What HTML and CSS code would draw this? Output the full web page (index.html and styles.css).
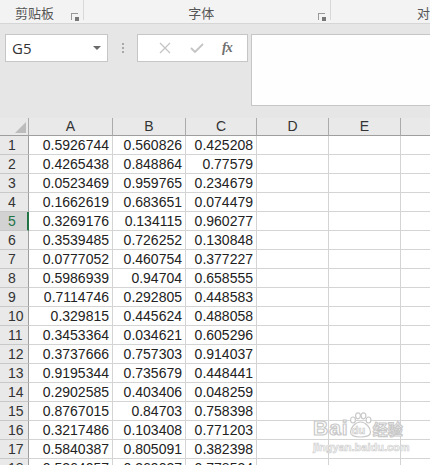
FILE: index.html
```html
<!DOCTYPE html>
<html lang="zh-CN">
<head>
  <meta charset="UTF-8">
  <title>Excel</title>
  <link rel="stylesheet" href="styles.css">
</head>
<body>
  <div class="window">
    <!-- ribbon group labels -->
    <div class="ribbon">
      <div class="group group-clip">
        <span class="group-label">剪贴板</span>
        <span class="launcher"></span>
      </div>
      <div class="group group-font">
        <span class="group-label">字体</span>
        <span class="launcher"></span>
      </div>
      <div class="group group-align">
        <span class="group-label">对</span>
      </div>
    </div>

    <!-- formula bar -->
    <div class="formula-bar">
      <div class="name-box">
        <span>G5</span>
        <span class="caret"></span>
      </div>
      <div class="grip"><i></i><i></i><i></i></div>
      <div class="fx-buttons">
        <svg width="12" height="12" viewBox="0 0 12 12"><path d="M1 1 L11 11 M11 1 L1 11" stroke="#c4c4c4" stroke-width="1.3" fill="none"/></svg>
        <svg width="14" height="12" viewBox="0 0 14 12"><path d="M1 6 L5 10 L13 2" stroke="#c4c4c4" stroke-width="1.8" fill="none"/></svg>
        <span class="fx">fx</span>
      </div>
      <div class="formula-input"></div>
    </div>

    <!-- sheet -->
    <div class="sheet">
      <div class="row head">
        <div class="corner"><span class="tri"></span></div>
        <div>A</div><div>B</div><div>C</div><div>D</div><div>E</div><div></div>
      </div>
      <div class="row"><div class="rh">1</div><div>0.5926744</div><div>0.560826</div><div>0.425208</div><div></div><div></div><div></div></div>
      <div class="row"><div class="rh">2</div><div>0.4265438</div><div>0.848864</div><div>0.77579</div><div></div><div></div><div></div></div>
      <div class="row"><div class="rh">3</div><div>0.0523469</div><div>0.959765</div><div>0.234679</div><div></div><div></div><div></div></div>
      <div class="row"><div class="rh">4</div><div>0.1662619</div><div>0.683651</div><div>0.074479</div><div></div><div></div><div></div></div>
      <div class="row"><div class="rh active">5</div><div>0.3269176</div><div>0.134115</div><div>0.960277</div><div></div><div></div><div></div></div>
      <div class="row"><div class="rh">6</div><div>0.3539485</div><div>0.726252</div><div>0.130848</div><div></div><div></div><div></div></div>
      <div class="row"><div class="rh">7</div><div>0.0777052</div><div>0.460754</div><div>0.377227</div><div></div><div></div><div></div></div>
      <div class="row"><div class="rh">8</div><div>0.5986939</div><div>0.94704</div><div>0.658555</div><div></div><div></div><div></div></div>
      <div class="row"><div class="rh">9</div><div>0.7114746</div><div>0.292805</div><div>0.448583</div><div></div><div></div><div></div></div>
      <div class="row"><div class="rh">10</div><div>0.329815</div><div>0.445624</div><div>0.488058</div><div></div><div></div><div></div></div>
      <div class="row"><div class="rh">11</div><div>0.3453364</div><div>0.034621</div><div>0.605296</div><div></div><div></div><div></div></div>
      <div class="row"><div class="rh">12</div><div>0.3737666</div><div>0.757303</div><div>0.914037</div><div></div><div></div><div></div></div>
      <div class="row"><div class="rh">13</div><div>0.9195344</div><div>0.735679</div><div>0.448441</div><div></div><div></div><div></div></div>
      <div class="row"><div class="rh">14</div><div>0.2902585</div><div>0.403406</div><div>0.048259</div><div></div><div></div><div></div></div>
      <div class="row"><div class="rh">15</div><div>0.8767015</div><div>0.84703</div><div>0.758398</div><div></div><div></div><div></div></div>
      <div class="row"><div class="rh">16</div><div>0.3217486</div><div>0.103408</div><div>0.771203</div><div></div><div></div><div></div></div>
      <div class="row"><div class="rh">17</div><div>0.5840387</div><div>0.805091</div><div>0.382398</div><div></div><div></div><div></div></div>
      <div class="row"><div class="rh">18</div><div>0.5264057</div><div>0.369037</div><div>0.778534</div><div></div><div></div><div></div></div>
    </div>

    <!-- baidu jingyan watermark -->
    <div class="watermark">
      <div class="wm-top">
        <span class="wm-bai">Bai</span>
        <span class="wm-paw">
          <svg width="23" height="26" viewBox="0 0 23 26">
            <g fill="#fff" stroke="#c9c9c9" stroke-width="1.2">
              <ellipse cx="4" cy="8" rx="2.4" ry="3"/>
              <ellipse cx="9" cy="3.8" rx="2.4" ry="3"/>
              <ellipse cx="14.5" cy="3.8" rx="2.4" ry="3"/>
              <ellipse cx="19.5" cy="8" rx="2.4" ry="3"/>
              <path d="M11.5 10 C6 10 1.5 16 1.5 20 C1.5 24 5.5 25 11.5 25 C17.5 25 21.5 24 21.5 20 C21.5 16 17 10 11.5 10 Z"/>
            </g>
          </svg>
          <span class="wm-du">du</span>
        </span>
        <span class="wm-jy">经验</span>
      </div>
      <div class="wm-url">jingyan.baidu.com</div>
    </div>
  </div>
</body>
</html>
```

FILE: styles.css
```css
body {
  margin: 0;
  background: #e6e6e6;
  font-family: "Liberation Sans", Arial, sans-serif;
  overflow: hidden;
}

.window {
  position: relative;
  width: 430px;
  height: 465px;
  overflow: hidden;
  background: #e6e6e6;
}

/* ribbon */
.ribbon {
  display: flex;
  height: 24px;
  background: #f3f3f3;
  border-bottom: 1px solid #d6d6d6;
  box-sizing: border-box;
  font-family: "Noto Sans CJK SC", sans-serif;
  font-size: 13px;
  color: #555;
}

.group {
  position: relative;
  height: 20px;
  border-right: 1px solid #d8d8d8;
  display: flex;
  align-items: center;
  box-sizing: border-box;
}

.group-label {
  line-height: 20px;
  padding-top: 6px;
}

.group-clip {
  width: 86px;
  padding-left: 15px;
}

.group-font {
  width: 250px;
  padding-left: 104px;
}

.group-align {
  flex: 1;
  border-right: none;
  padding-left: 86px;
}

.launcher {
  position: absolute;
  right: 5px;
  bottom: 0;
  width: 6px;
  height: 6px;
  border-left: 1px solid #999;
  border-top: 1px solid #999;
}

.launcher::after {
  content: "";
  position: absolute;
  right: -1px;
  bottom: -1px;
  width: 4px;
  height: 4px;
  background: #777;
}

/* formula bar */
.formula-bar {
  display: flex;
  align-items: flex-start;
  height: 93px;
  padding-top: 10px;
  box-sizing: border-box;
}

.name-box {
  width: 103px;
  height: 28px;
  margin-left: 5px;
  background: #fff;
  border: 1px solid #c6c6c6;
  box-sizing: border-box;
  display: flex;
  align-items: center;
  justify-content: space-between;
  padding: 0 6px 0 6px;
  font-family: "Open Sans", sans-serif;
  font-size: 15px;
  color: #333;
}

.caret {
  width: 0;
  height: 0;
  border-left: 4px solid transparent;
  border-right: 4px solid transparent;
  border-top: 4px solid #6a6a6a;
}

.grip {
  width: 29px;
  height: 28px;
  display: flex;
  flex-direction: column;
  align-items: center;
  justify-content: center;
  gap: 2px;
}

.grip i {
  width: 2px;
  height: 2px;
  background: #a8a8a8;
}

.fx-buttons {
  width: 111px;
  height: 28px;
  background: #fff;
  border: 1px solid #c6c6c6;
  box-sizing: border-box;
  display: flex;
  align-items: center;
  justify-content: space-around;
  padding: 0 6px 0 12px;
}

.fx {
  font-family: "Liberation Serif", serif;
  font-style: italic;
  font-weight: bold;
  font-size: 14px;
  color: #707070;
  letter-spacing: -1px;
}

.formula-input {
  flex: 1;
  height: 72px;
  margin-left: 3px;
  background: #fefefe;
  border: 1px solid #c6c6c6;
  border-right: none;
  box-sizing: border-box;
}

/* sheet grid */
.sheet {
  background: #fff;
}

.row {
  display: grid;
  grid-template-columns: 29px 84px 73px 71px 72px 72px 60px;
  height: 19px;
  font-size: 14px;
  color: #222;
}

.row > div {
  border-right: 1px solid #d4d4d4;
  border-bottom: 1px solid #d4d4d4;
  box-sizing: border-box;
  text-align: right;
  padding-right: 3px;
  line-height: 18px;
  white-space: nowrap;
  overflow: hidden;
}

.row > .rh {
  background: #e9e9e9;
  color: #333;
  text-align: left;
  padding-left: 8px;
  border-right: 1px solid #9e9e9e;
  border-bottom: 1px solid #c8c8c8;
}

.row > .rh.active {
  background: #d2d2d2;
  color: #217346;
  border-right: 2px solid #217346;
}

.row.head {
  height: 18px;
  margin-top: 1px;
  background: #e9e9e9;
}

.row.head > div {
  background: #e9e9e9;
  text-align: center;
  padding-right: 0;
  color: #333;
  line-height: 17px;
  border-right: 1px solid #ababab;
  border-bottom: 1px solid #9e9e9e;
}

.corner {
  position: relative;
}

.tri {
  position: absolute;
  right: 2px;
  bottom: 2px;
  width: 0;
  height: 0;
  border-left: 11px solid transparent;
  border-bottom: 11px solid #bcbcbc;
}

/* watermark over the grid */
.watermark {
  position: absolute;
  left: 313px;
  top: 411px;
  width: 92px;
}

.wm-top {
  display: flex;
  align-items: flex-end;
  height: 27px;
}

.wm-bai,
.wm-du {
  font-family: "Liberation Sans", Arial, sans-serif;
  font-weight: bold;
  color: #fff;
  -webkit-text-stroke: 1.2px #c9c9c9;
}

.wm-bai {
  font-size: 21px;
  line-height: 20px;
  letter-spacing: 1px;
}

.wm-paw {
  position: relative;
  width: 23px;
  height: 26px;
}

.wm-paw svg {
  display: block;
}

.wm-du {
  position: absolute;
  left: 3px;
  bottom: 2px;
  font-size: 11px;
  line-height: 11px;
  -webkit-text-stroke: 0.7px #c9c9c9;
}

.wm-jy {
  font-family: "Noto Sans CJK SC", sans-serif;
  font-weight: bold;
  font-size: 15px;
  line-height: 18px;
  margin-left: 1px;
  color: #fff;
  -webkit-text-stroke: 1.1px #c9c9c9;
}

.wm-url {
  font-family: "Liberation Sans", Arial, sans-serif;
  font-weight: bold;
  font-size: 11px;
  margin-top: 3px;
  color: #fff;
  -webkit-text-stroke: 0.7px #cfcfcf;
}
```
